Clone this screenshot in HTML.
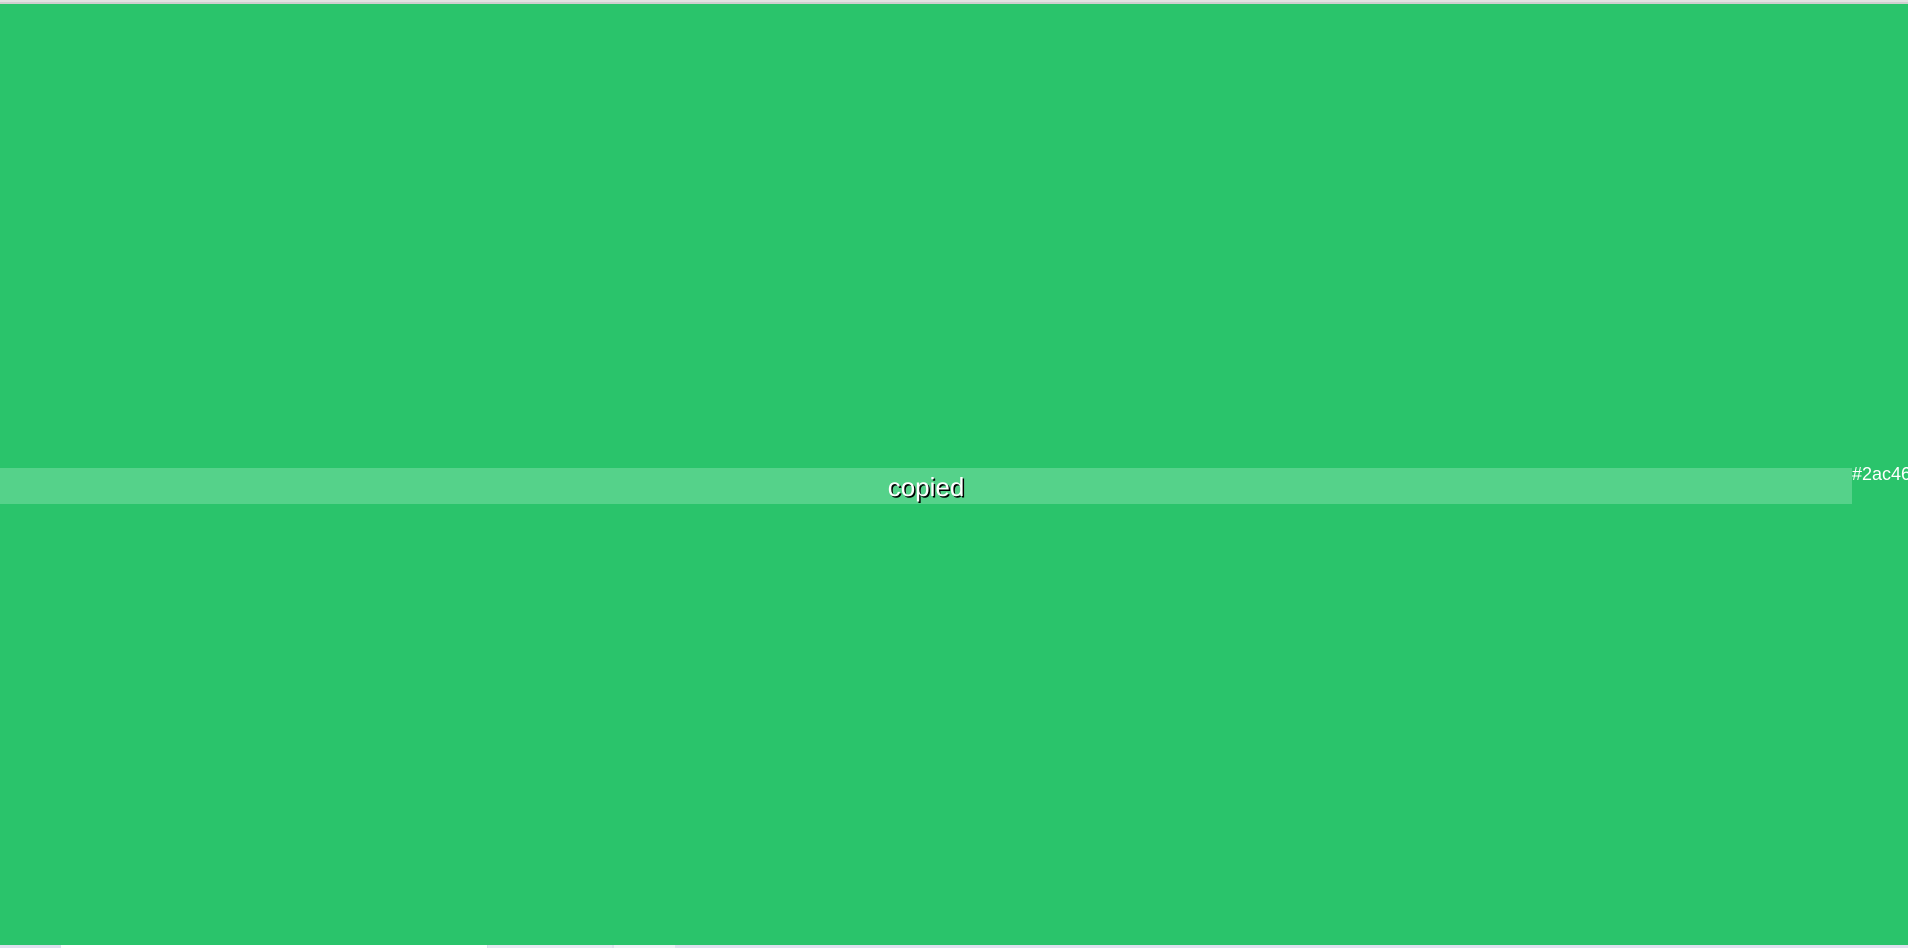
<!DOCTYPE html>
<html><head><meta charset="utf-8"><style>
html,body{margin:0;padding:0;width:1908px;height:948px;overflow:hidden;background:#2ac46b;font-family:"Liberation Sans",Arial,sans-serif;position:relative}
.top{position:absolute;left:0;top:0;width:1908px;height:2px;background:#e2e2e2}
.top2{position:absolute;left:0;top:2px;width:1908px;height:2px;background:#cfcfcf}
.band{position:absolute;left:0;top:468px;width:1852px;height:36px;background:#55d28a}
.copied{position:absolute;left:0;top:472px;width:1852px;height:30px;line-height:30px;text-align:center;color:#fff;font-size:26px;text-shadow:1.5px 1.5px 0 #000}
.hex{position:absolute;left:1852px;top:464px;line-height:20px;color:#fff;font-size:18px;white-space:nowrap}
.bot{position:absolute;left:0;top:945px;width:1908px;height:3px;background:#dde0ee}
.bw{position:absolute;left:61px;top:945px;width:426px;height:3px;background:#fff}
.bw2{position:absolute;left:488px;top:945px;width:124px;height:3px;background:#e6e9f2}
.bw3{position:absolute;left:614px;top:945px;width:61px;height:3px;background:#eef1f6}
</style></head><body>
<div class="top"></div><div class="top2"></div>
<div class="band"></div>
<div class="copied">copied</div>
<div class="hex">#2ac46b</div>
<div class="bot"></div><div class="bw"></div><div class="bw2"></div><div class="bw3"></div>
</body></html>
